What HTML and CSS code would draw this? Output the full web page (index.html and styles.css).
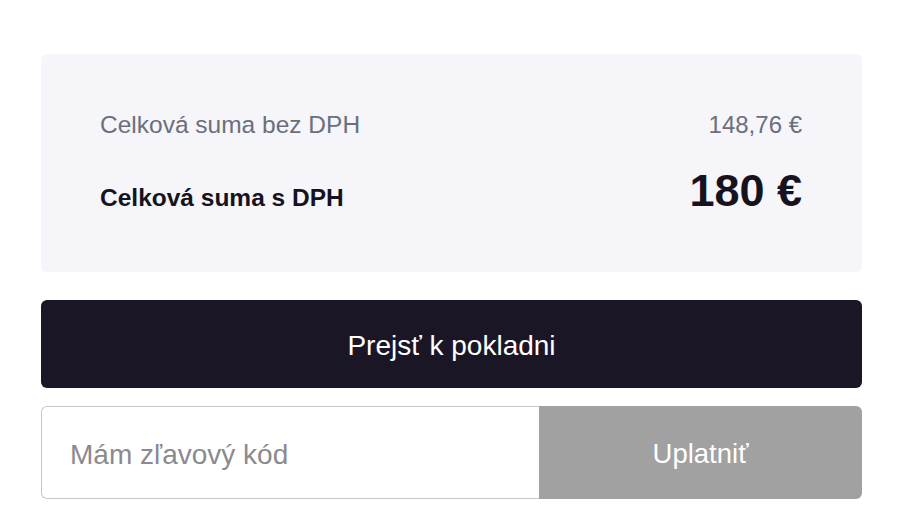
FILE: index.html
```html
<!DOCTYPE html>
<html lang="sk">
<head>
<meta charset="utf-8">
<link rel="stylesheet" href="styles.css">
</head>
<body>
<div class="checkout">
  <div class="summary">
    <div class="row row-net">
      <span class="label">Celková suma bez DPH</span>
      <span class="value">148,76 €</span>
    </div>
    <div class="row row-total">
      <span class="label">Celková suma s DPH</span>
      <span class="value">180 €</span>
    </div>
  </div>
  <button class="btn-checkout" type="button">Prejsť k pokladni</button>
  <form class="coupon">
    <input class="coupon-input" type="text" placeholder="Mám zľavový kód">
    <button class="coupon-btn" type="button">Uplatniť</button>
  </form>
</div>
</body>
</html>
```
FILE: styles.css
```css
* { box-sizing: border-box; }
html, body { margin: 0; padding: 0; background: #ffffff; }
body { font-family: "Liberation Sans", Arial, sans-serif; color: #16131f; }

.checkout {
  width: 821px;
  margin: 54px 0 0 41px;
  display: flex;
  flex-direction: column;
}

.summary {
  background: #f5f5fa;
  border-radius: 6px;
  height: 218px;
  padding: 57px 60px 0 59px;
  display: flex;
  flex-direction: column;
  gap: 26px;
}

.row {
  display: flex;
  justify-content: space-between;
  align-items: baseline;
}

.row-net {
  font-size: 24.5px;
  line-height: 28px;
  color: #6b6f7b;
}

.row-net .value { font-size: 24px; }

.row-total .label {
  font-size: 24.5px;
  font-weight: bold;
  color: #16131f;
}

.row-total .value {
  font-size: 45px;
  line-height: 52px;
  font-weight: bold;
  color: #16131f;
}

.btn-checkout {
  margin-top: 28px;
  height: 88px;
  padding: 3px 0 0 0;
  border: none;
  border-radius: 6px;
  background: #1b1626;
  color: #ffffff;
  font-family: "Liberation Sans", Arial, sans-serif;
  font-size: 28px;
  cursor: pointer;
}

.coupon {
  margin: 18px 0 0 0;
  display: flex;
  height: 93px;
}

.coupon-input {
  width: 498px;
  height: 100%;
  border: 1px solid #c6c6cf;
  border-right: none;
  border-radius: 6px 0 0 6px;
  padding: 4px 0 0 28px;
  font-family: "Liberation Sans", Arial, sans-serif;
  font-size: 28px;
  color: #16131f;
  background: #ffffff;
  outline: none;
}

.coupon-input::placeholder { color: #8a8a8f; }

.coupon-btn {
  flex: 1;
  height: 100%;
  padding: 2px 0 0 0;
  border: none;
  border-radius: 0 6px 6px 0;
  background: #a1a1a1;
  color: #ffffff;
  font-family: "Liberation Sans", Arial, sans-serif;
  font-size: 27.5px;
}
```
